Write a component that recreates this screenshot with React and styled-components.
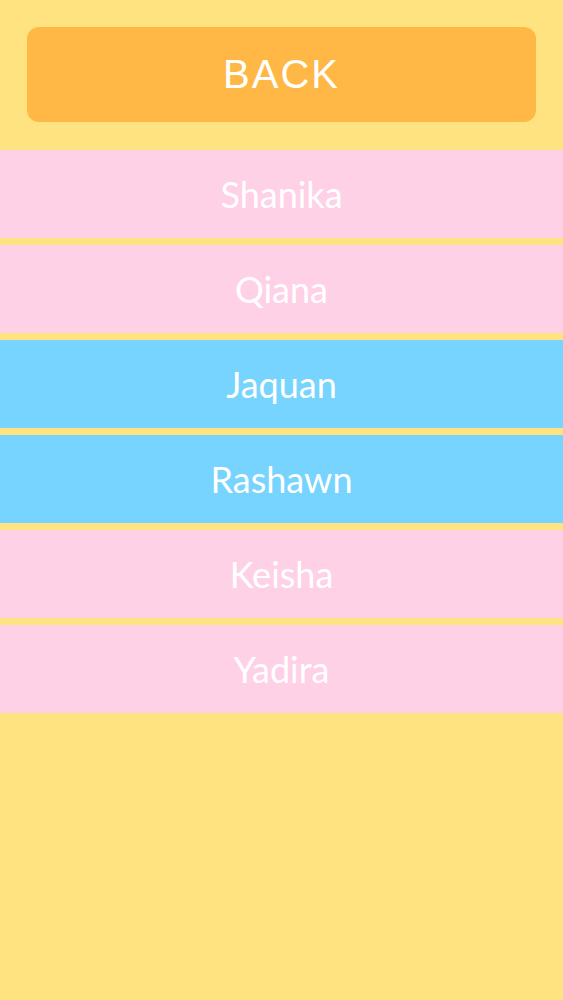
import styled, { createGlobalStyle } from "styled-components";

const GlobalStyle = createGlobalStyle`
  html, body {
    margin: 0;
    padding: 0;
    background-color: #ffe380;
  }
  #root {
    min-height: 100vh;
  }
`;

const people = [
  { name: "Shanika", gender: "girl" },
  { name: "Qiana", gender: "girl" },
  { name: "Jaquan", gender: "boy" },
  { name: "Rashawn", gender: "boy" },
  { name: "Keisha", gender: "girl" },
  { name: "Yadira", gender: "girl" },
];

export default function App() {
  return (
    <>
      <GlobalStyle />
      <Page>
        <Header>
          <BackButton type="button">BACK</BackButton>
        </Header>
        <NameList>
          {people.map((person) => (
            <NameRow key={person.name} variant={person.gender}>
              {person.name}
            </NameRow>
          ))}
        </NameList>
      </Page>
    </>
  );
}

const Page = styled.main`
  display: flex;
  flex-direction: column;
  min-height: 100vh;
  background-color: #ffe380;
`;

const Header = styled.div`
  padding: 27px 27px 28px 27px;
`;

const BackButton = styled.button`
  display: flex;
  align-items: center;
  justify-content: center;
  width: 100%;
  height: 95px;
  border: none;
  border-radius: 12px;
  background-color: #ffb845;
  color: #ffffff;
  font-family: "Liberation Sans", sans-serif;
  font-size: 40px;
  letter-spacing: 2px;
  cursor: pointer;
`;

const NameList = styled.ul`
  display: flex;
  flex-direction: column;
  gap: 7px;
  margin: 0;
  padding: 0;
  list-style: none;
`;

const NameRow = styled.li`
  display: flex;
  align-items: center;
  justify-content: center;
  height: 88px;
  background-color: ${({ variant }) =>
    variant === "boy" ? "#76d4fe" : "#ffd1e6"};
  color: #ffffff;
  font-family: Lato, "Open Sans", sans-serif;
  font-size: 36px;
`;
